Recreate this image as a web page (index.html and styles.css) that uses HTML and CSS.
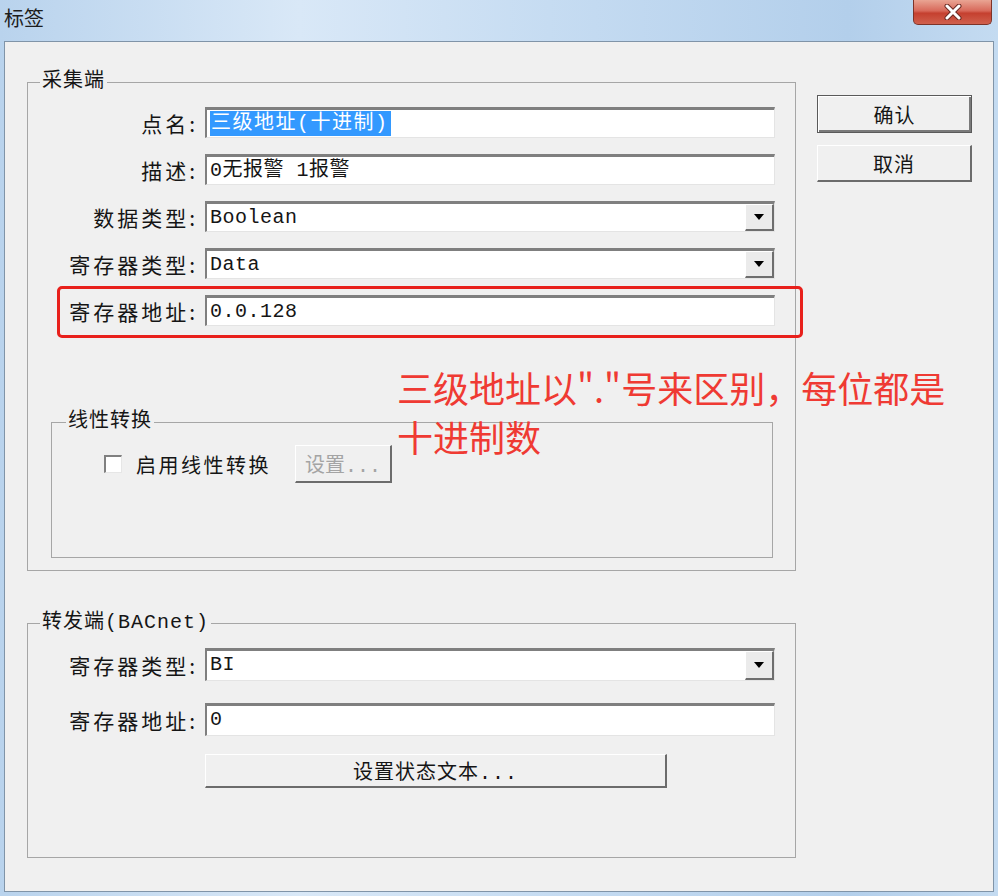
FILE: index.html
```html
<!DOCTYPE html>
<html lang="zh-CN">
<head>
    <meta charset="UTF-8">
    <meta name="viewport" content="width=device-width, initial-scale=1.0">
    <title>标签</title>
    <link rel="stylesheet" href="styles.css">
</head>
<body>
    <div class="window">
        <div class="titlebar">
            <span class="title">标签</span>
            <button class="close" aria-label="关闭">
                <svg width="18" height="16" viewBox="0 0 18 16">
                    <path d="M3 2 L15 14 M15 2 L3 14" stroke="#6b2a22" stroke-width="5" stroke-linecap="round"/>
                    <path d="M3 2 L15 14 M15 2 L3 14" stroke="#fff" stroke-width="3" stroke-linecap="round"/>
                </svg>
            </button>
        </div>

        <div class="client">
            <div class="main">
                <fieldset class="group group-collect">
                    <legend>采集端</legend>

                    <div class="row">
                        <label>点名:</label>
                        <div class="field"><span class="selected">三级地址(十进制)</span></div>
                    </div>
                    <div class="row">
                        <label>描述:</label>
                        <div class="field">0无报警 1报警</div>
                    </div>
                    <div class="row">
                        <label>数据类型:</label>
                        <div class="field select"><span class="value">Boolean</span><span class="drop"><i></i></span></div>
                    </div>
                    <div class="row">
                        <label>寄存器类型:</label>
                        <div class="field select"><span class="value">Data</span><span class="drop"><i></i></span></div>
                    </div>
                    <div class="row">
                        <label>寄存器地址:</label>
                        <div class="field">0.0.128</div>
                    </div>

                    <fieldset class="group group-linear">
                        <legend>线性转换</legend>
                        <div class="check-row">
                            <span class="checkbox"></span>
                            <span class="check-label">启用线性转换</span>
                            <button class="btn btn-small" disabled>设置...</button>
                        </div>
                    </fieldset>
                </fieldset>

                <fieldset class="group group-forward">
                    <legend>转发端(BACnet)</legend>

                    <div class="row row-tall">
                        <label>寄存器类型:</label>
                        <div class="field select"><span class="value">BI</span><span class="drop"><i></i></span></div>
                    </div>
                    <div class="row row-tall">
                        <label>寄存器地址:</label>
                        <div class="field">0</div>
                    </div>
                    <button class="btn btn-wide">设置状态文本...</button>
                </fieldset>
            </div>

            <div class="side">
                <button class="btn btn-default">确认</button>
                <button class="btn">取消</button>
            </div>

            <div class="mark"></div>
            <div class="note">三级地址以"."号来区别，每位都是<br>十进制数</div>
        </div>
    </div>
</body>
</html>
```

FILE: styles.css
```css
* {
    box-sizing: border-box;
}
body {
    margin: 0;
    width: 998px;
    height: 896px;
    overflow: hidden;
    background: linear-gradient(to right, #b9d3ed, #d9e8f7 30%, #c6dcf2 55%, #b3cfeb 85%, #c4dbf1);
    font-family: "Liberation Mono", "Noto Sans CJK SC", monospace;
    font-size: 20px;
    color: #151515;
}
.titlebar {
    height: 41px;
    display: flex;
    align-items: flex-start;
    padding: 0 6px 0 4px;
}
.title {
    font-family: "Noto Sans CJK SC", sans-serif;
    font-size: 20px;
    line-height: 20px;
    margin-top: 8px;
    color: #1d1d1d;
}
.close {
    margin-left: auto;
    width: 79px;
    height: 25px;
    padding: 0;
    border: 1px solid #7d3328;
    border-top: none;
    border-radius: 0 0 5px 5px;
    background: linear-gradient(#e9a493, #d8695a 45%, #c5402f 55%, #d0604d);
    display: flex;
    align-items: center;
    justify-content: center;
}
.client {
    margin: 0 4px 0 4px;
    height: 851px;
    border: 1px solid #8094a8;
    background: #f0f0f0;
    position: relative;
    display: flex;
}
.main {
    padding: 29px 0 0 22px;
}
.group {
    margin: 0;
    width: 769px;
    min-width: 0;
    border: 1px solid #a6a6a6;
    padding: 14px 0 0 12px;
}
.group legend {
    padding: 0 2px;
    line-height: 22px;
    letter-spacing: 1px;
}
.group-collect {
    height: 500px;
}
.group-linear {
    margin: 85px 0 0 11px;
    width: 722px;
    height: 147px;
    padding: 12px 0 0 14px;
}
.group-forward {
    margin-top: 41px;
    height: 246px;
}
.row {
    display: flex;
    align-items: center;
    height: 31px;
}
.row + .row {
    margin-top: 16px;
}
.row-tall {
    height: 33px;
}
.row-tall + .row-tall {
    margin-top: 22px;
}
.row label {
    width: 158px;
    text-align: right;
    font-size: 21px;
    letter-spacing: 3px;
    font-family: "Noto Sans CJK SC", sans-serif;
}
.field {
    margin-left: 7px;
    width: 570px;
    height: 100%;
    background: #fff;
    border-top: 3px solid #7f7f7f;
    border-left: 2px solid #7f7f7f;
    border-right: 1px solid #e4e4e4;
    border-bottom: 1px solid #e4e4e4;
    padding-left: 3px;
    line-height: 27px;
    letter-spacing: 0.5px;
    white-space: nowrap;
}
.selected {
    display: inline-block;
    background: #3399ff;
    color: #fff;
    line-height: 25px;
    letter-spacing: 1.5px;
    padding: 0 2px 0 1px;
}
.select {
    display: flex;
}
.select .value {
    flex: 1;
}
.drop {
    width: 29px;
    height: 100%;
    background: #ebebeb;
    border-top: 1px solid #fff;
    border-left: 1px solid #fff;
    border-right: 2px solid #6e6e6e;
    border-bottom: 2px solid #6e6e6e;
    display: flex;
    align-items: center;
    justify-content: center;
}
.drop i {
    width: 0;
    height: 0;
    border-left: 5px solid transparent;
    border-right: 5px solid transparent;
    border-top: 6px solid #000;
}
.check-row {
    display: flex;
    align-items: center;
    height: 38px;
}
.checkbox {
    width: 18px;
    height: 18px;
    margin-left: 38px;
    background: #fff;
    border-top: 2px solid #808080;
    border-left: 2px solid #808080;
    border-right: 1px solid #e6e6e6;
    border-bottom: 1px solid #e6e6e6;
}
.check-label {
    margin-left: 14px;
    font-family: "Noto Sans CJK SC", sans-serif;
    letter-spacing: 2.5px;
}
.btn {
    font: inherit;
    color: #151515;
    background: #f0f0f0;
    padding: 0;
    border-style: solid;
    border-color: #fff #6c6c6c #6c6c6c #fff;
    border-width: 1px 2px 2px 1px;
}
.btn-small {
    margin-left: 24px;
    width: 97px;
    height: 38px;
    color: #a4a4a4;
}
.btn-wide {
    display: block;
    margin: 18px 0 0 165px;
    width: 462px;
    height: 34px;
    letter-spacing: 1px;
}
.side {
    margin-left: 21px;
    padding-top: 53px;
    display: flex;
    flex-direction: column;
}
.side .btn {
    width: 155px;
    height: 38px;
    font-family: "Noto Sans CJK SC", sans-serif;
    letter-spacing: 1px;
}
.side .btn + .btn {
    margin-top: 12px;
    height: 37px;
}
.btn-default {
    border: 1px solid #5a5a5a;
    box-shadow: inset 1px 1px #fff, inset -2px -2px #7a7a7a;
}
.mark {
    position: absolute;
    left: 52px;
    top: 244px;
    width: 746px;
    height: 52px;
    border: 3px solid #e8201b;
    border-radius: 5px;
}
.note {
    position: absolute;
    left: 392px;
    top: 321px;
    font-family: "Noto Sans CJK SC", sans-serif;
    font-size: 36px;
    line-height: 49px;
    color: #ef3a33;
    white-space: nowrap;
}
```
